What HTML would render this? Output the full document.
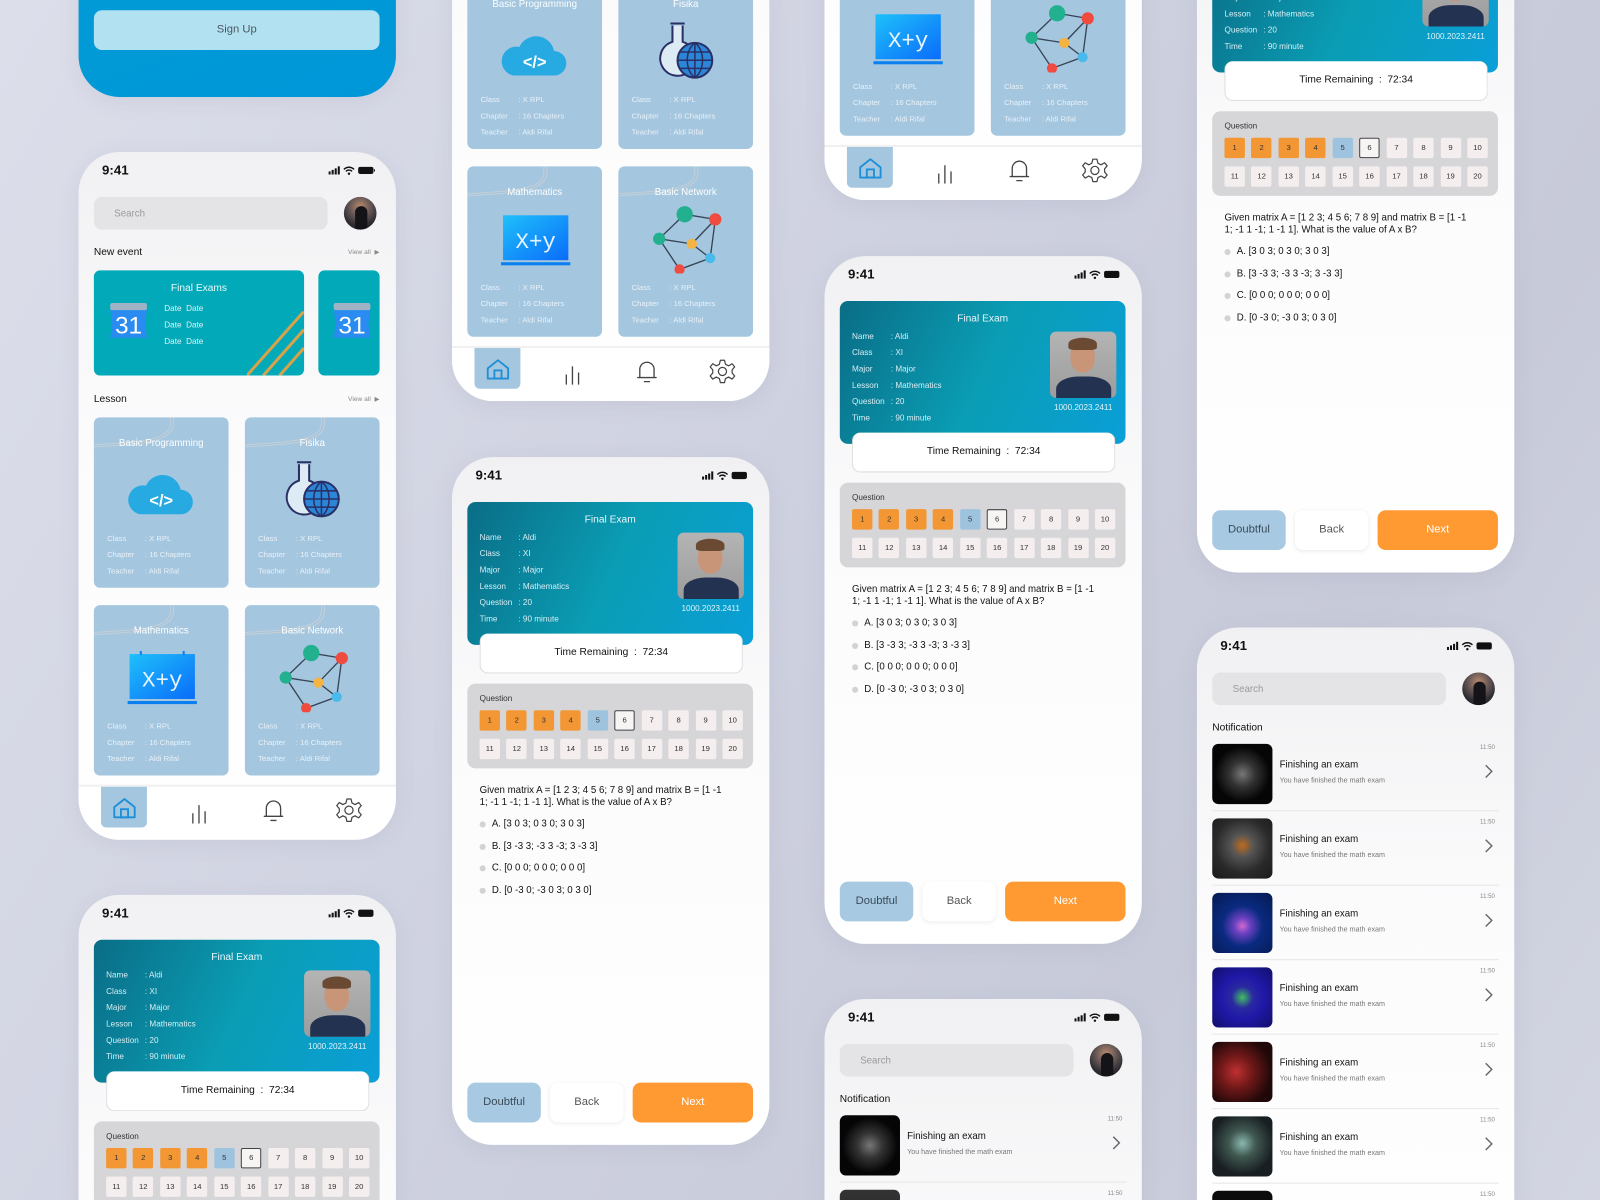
<!DOCTYPE html>
<html><head><meta charset="utf-8">
<style>
*{margin:0;padding:0;box-sizing:border-box}
html,body{width:1600px;height:1200px;overflow:hidden}
#clip{position:relative;width:1600px;height:1200px;overflow:hidden;background:linear-gradient(120deg,#dcdeea 0%,#cdd0df 50%,#c7cad9 75%,#d3d6e2 100%);font-family:"Liberation Sans",sans-serif;color:#222}
#w{position:absolute;left:0;top:0;width:1568px;height:1176px;transform:scale(1.0204);transform-origin:0 0}
.ph{position:absolute;width:311px;height:674px;border-radius:40px;background:linear-gradient(180deg,#f1f1f3 0%,#fbfbfc 40%,#ffffff 100%);overflow:hidden;box-shadow:0 4px 20px rgba(120,125,150,.12)}
.a{position:absolute}
.tm{position:absolute;left:23px;top:10px;font-size:13px;font-weight:bold;color:#111}
.sti{position:absolute;right:20px;top:13px}
.srch{position:absolute;left:15px;top:44px;width:229px;height:32px;border-radius:8px;background:#e4e4e6;font-size:9.5px;color:#9a9a9e;padding:11px 0 0 20px}
.av{position:absolute;left:260px;top:44px;width:32px;height:32px;border-radius:50%;background:radial-gradient(circle at 50% 30%,#b98a6a 0,#6a5a58 35%,#2a2a30 70%);overflow:hidden}
.av:after{content:"";position:absolute;left:11px;top:9px;width:12px;height:26px;border-radius:6px 6px 0 0;background:#141418}
.h{position:absolute;font-size:10px;color:#111}
.va{position:absolute;right:16px;font-size:6.5px;color:#888}
.ev{position:absolute;top:116px;height:103px;background:#02aab9;border-radius:6px;overflow:hidden}
.ev .t{position:absolute;top:12px;width:100%;text-align:center;color:#eaf8fa;font-size:10px}
.ev .d{position:absolute;left:69px;font-size:8px;color:#dff4f7}
.cal{position:absolute;width:38px;height:36px}
.lc{position:absolute;width:132px;height:167px;background:#a4c6df;border-radius:6px;overflow:hidden}
.lc .t{position:absolute;top:20px;width:100%;text-align:center;color:#fff;font-size:9.5px}
.lc .r{position:absolute;left:13px;font-size:7.5px;color:#e9f1f8}
.lc .r b{font-weight:normal;position:absolute;left:37px;white-space:nowrap}
.nav{position:absolute;left:0;top:620px;width:311px;height:54px;background:#fff;border-top:2px solid #f0f0f0}
.hb{position:absolute;left:22px;top:0;width:45px;height:40px;background:#a4c6df;border-radius:0 0 5px 5px}
.ec{position:absolute;left:15px;top:44px;width:280px;height:140px;border-radius:8px;background:linear-gradient(115deg,#0a6d86 0%,#0a9db4 50%,#0a9fd8 100%);overflow:hidden}
.ec .t{position:absolute;top:12px;width:100%;text-align:center;color:#e8f7fa;font-size:10px}
.ec .r{position:absolute;left:12px;font-size:8px;color:#d7eef4}
.ec .r b{font-weight:normal;position:absolute;left:38px;white-space:nowrap}
.pho{position:absolute;left:206px;top:30px;width:65px;height:65px;border-radius:6px;background:linear-gradient(#b4b4b4,#9c9c9c);overflow:hidden}
.pho .f{position:absolute;left:20px;top:10px;width:24px;height:30px;border-radius:45%;background:#c99578}
.pho .hr{position:absolute;left:18px;top:6px;width:28px;height:12px;border-radius:50% 50% 20% 20%;background:#6b4a34}
.pho .s{position:absolute;left:6px;top:44px;width:54px;height:30px;border-radius:40% 40% 0 0;background:#243252}
.ec .id{position:absolute;left:196px;top:100px;width:85px;text-align:center;font-size:8px;color:#dff3f8}
.trb{position:absolute;left:27px;top:173px;width:258px;height:39px;border-radius:8px;background:#fff;border:1px solid #ddd;border-top:none;text-align:center;font-size:10px;padding-top:13px;color:#111}
.qp{position:absolute;left:15px;top:222px;width:280px;height:83px;border-radius:8px;background:#d6d6d9}
.qp .l{position:absolute;left:12px;top:10px;font-size:8px;color:#333}
.qr{position:absolute;left:12px;width:258px;display:flex;justify-content:space-between}
.qr span{width:20px;height:20px;background:#f4eeee;font-size:7.5px;color:#333;text-align:center;line-height:20px;border-radius:2px}
.qr .o{background:#f29733}
.qr .b{background:#9dc3df}
.qr .c{border:1.5px solid #444;line-height:17px;background:#f7f4f4}
.qt{position:absolute;left:27px;top:321px;width:258px;font-size:9.5px;line-height:12px;color:#111}
.op{position:absolute;left:39px;font-size:9.5px;color:#111}
.op:before{content:"";position:absolute;left:-12px;top:3px;width:6px;height:6px;border-radius:50%;background:#d3d3d6}
.bt{position:absolute;top:613px;height:39px;border-radius:8px;text-align:center;font-size:11px;line-height:39px}
.ni{position:absolute;left:15px;width:281px;height:66px;border-bottom:1px solid #e6e6e6}
.ni .th{position:absolute;left:0;top:0;width:59px;height:59px;border-radius:6px;overflow:hidden}
.ni .t{position:absolute;left:66px;top:15px;font-size:9.5px;color:#111}
.ni .s{position:absolute;left:66px;top:33px;font-size:7px;color:#777}
.ni .tm2{position:absolute;right:4px;top:1px;font-size:6px;color:#888}
.ni .ch{position:absolute;right:6px;top:20px}
</style></head><body><div id="clip"><div id="w">

<div class="ph" style="left:77px;top:-579px;background:linear-gradient(160deg,#04a4cf,#0097d8)">
 <div class="a" style="left:15px;top:589px;width:280px;height:39px;border-radius:8px;background:#b2e2f1;text-align:center;line-height:39px;font-size:11px;color:#4a5660">Sign Up</div>
</div>

<div class="ph" style="left:77px;top:149px">
 <div class="tm">9:41</div>
 <svg class="sti" width="46" height="10" viewBox="0 0 46 10"><rect x="0" y="6" width="2" height="3" fill="#111"/><rect x="3" y="4.5" width="2" height="4.5" fill="#111"/><rect x="6" y="3" width="2" height="6" fill="#111"/><rect x="9" y="1" width="2" height="8" fill="#111"/><path d="M15 4a7 7 0 0 1 10 0M17 6a4 4 0 0 1 6 0" stroke="#111" stroke-width="1.4" fill="none"/><circle cx="20" cy="8.3" r="1.2" fill="#111"/><rect x="29" y="1.5" width="15" height="7" rx="2" fill="#111"/><rect x="44.5" y="4" width="1" height="2" fill="#111"/></svg>
 <div class="srch">Search</div><div class="av"></div>
 <div class="h" style="left:15px;top:93px">New event</div><div class="va" style="top:94px">View all &nbsp;▶</div>
 <div class="ev" style="left:15px;width:206px"><div class="t">Final Exams</div>
  <svg class="cal" style="left:15px;top:31px" viewBox="0 0 38 36"><rect x="1" y="1" width="36" height="7" rx="2" fill="#9fb2c6"/><path d="M1 8H37L35 21L37 35H1L3 21Z" fill="#2a8cf0"/><text x="19" y="31" font-size="24" fill="#fff" text-anchor="middle" font-family="Liberation Sans">31</text></svg>
  <div class="d" style="top:33px">Date &nbsp;Date</div><div class="d" style="top:49px">Date &nbsp;Date</div><div class="d" style="top:65px">Date &nbsp;Date</div>
  <svg class="a" style="left:150px;top:40px" width="56" height="63"><path d="M0 63L56 0M16 63L56 18M32 63L56 36" stroke="#d8a24a" stroke-width="3"/></svg></div>
 <div class="ev" style="left:235px;width:60px"><svg class="cal" style="left:14px;top:31px" viewBox="0 0 38 36"><rect x="1" y="1" width="36" height="7" rx="2" fill="#9fb2c6"/><path d="M1 8H37L35 21L37 35H1L3 21Z" fill="#2a8cf0"/><text x="19" y="31" font-size="24" fill="#fff" text-anchor="middle" font-family="Liberation Sans">31</text></svg></div>
 <div class="h" style="left:15px;top:237px">Lesson</div><div class="va" style="top:238px">View all &nbsp;▶</div>
 <div class="lc" style="left:15px;top:260px"><svg class="a" style="left:0;top:0" width="80" height="30"><path d="M0 27C40 24 75 24 75 6V0M0 29C42 26 78 26 78 6V0" stroke="#c5cfd6" stroke-width="1" fill="none"/></svg><div class="t">Basic Programming</div>
  <svg class="a" style="left:33px;top:53px" width="66" height="44" viewBox="0 0 66 44"><path d="M12 42H52A12 12 0 0 0 52 18A18 18 0 0 0 18 14A14 14 0 0 0 12 42Z" fill="#27a9e1"/><text x="33" y="34" font-size="16" font-weight="bold" fill="#fff" text-anchor="middle" font-family="Liberation Sans">&lt;/&gt;</text></svg>
  <div class="r" style="top:114px">Class<b>: X RPL</b></div><div class="r" style="top:130px">Chapter<b>: 16 Chapters</b></div><div class="r" style="top:146px">Teacher<b>: Aldi Rifal</b></div></div>
 <div class="lc" style="left:163px;top:260px"><svg class="a" style="left:0;top:0" width="80" height="30"><path d="M0 27C40 24 75 24 75 6V0M0 29C42 26 78 26 78 6V0" stroke="#c5cfd6" stroke-width="1" fill="none"/></svg><div class="t">Fisika</div>
  <svg class="a" style="left:38px;top:42px" width="58" height="60" viewBox="0 0 58 60"><path d="M13 2H27M15 4V20A17 17 0 1 0 25 20V4" fill="#dcebf4" stroke="#2a2f66" stroke-width="2"/><circle cx="37" cy="38" r="17" fill="#2c86d8" stroke="#2a2f66" stroke-width="2"/><path d="M20 38H54M22 30H52M22 46H52M37 21V55M37 21C27 28 27 48 37 55M37 21C47 28 47 48 37 55" stroke="#2a2f66" stroke-width="1.5" fill="none"/></svg>
  <div class="r" style="top:114px">Class<b>: X RPL</b></div><div class="r" style="top:130px">Chapter<b>: 16 Chapters</b></div><div class="r" style="top:146px">Teacher<b>: Aldi Rifal</b></div></div>
 <div class="lc" style="left:15px;top:444px"><svg class="a" style="left:0;top:0" width="80" height="30"><path d="M0 27C40 24 75 24 75 6V0M0 29C42 26 78 26 78 6V0" stroke="#c5cfd6" stroke-width="1" fill="none"/></svg><div class="t">Mathematics</div>
  <svg class="a" style="left:33px;top:44px" width="68" height="56" viewBox="0 0 68 56"><defs><linearGradient id="g1" x1="0" y1="0" x2="1" y2="1"><stop offset="0" stop-color="#1ec0fa"/><stop offset="1" stop-color="#0a6cfa"/></linearGradient></defs><rect x="2" y="4" width="64" height="44" fill="url(#g1)"/><rect x="12" y="1" width="2" height="4" fill="#0a80f0"/><rect x="54" y="1" width="2" height="4" fill="#0a80f0"/><rect x="0" y="50" width="68" height="3" fill="#0a80f0"/><text x="34" y="36" font-size="22" fill="#e6f4ff" text-anchor="middle" font-family="Liberation Mono">X+y</text></svg>
  <div class="r" style="top:114px">Class<b>: X RPL</b></div><div class="r" style="top:130px">Chapter<b>: 16 Chapters</b></div><div class="r" style="top:146px">Teacher<b>: Aldi Rifal</b></div></div>
 <div class="lc" style="left:163px;top:444px"><svg class="a" style="left:0;top:0" width="80" height="30"><path d="M0 27C40 24 75 24 75 6V0M0 29C42 26 78 26 78 6V0" stroke="#c5cfd6" stroke-width="1" fill="none"/></svg><div class="t">Basic Network</div>
  <svg class="a" style="left:32px;top:39px" width="70" height="66" viewBox="0 0 70 66"><path d="M33 8L63 13L58 51L28 62L8 32L33 8M8 32L40 37L63 13M40 37L58 51" stroke="#354454" stroke-width="1.3" fill="none"/><circle cx="33" cy="8" r="8" fill="#22b08f"/><circle cx="63" cy="13" r="6" fill="#ef4b3f"/><circle cx="8" cy="32" r="6" fill="#22b08f"/><circle cx="40" cy="37" r="5" fill="#f5b342"/><circle cx="58" cy="51" r="5" fill="#4ab9ec"/><circle cx="28" cy="62" r="5" fill="#ef4b3f"/></svg>
  <div class="r" style="top:114px">Class<b>: X RPL</b></div><div class="r" style="top:130px">Chapter<b>: 16 Chapters</b></div><div class="r" style="top:146px">Teacher<b>: Aldi Rifal</b></div></div>
 <div class="nav"><div class="hb"></div>
  <svg class="a" style="left:33px;top:10px" width="24" height="22" viewBox="0 0 24 22"><path d="M2 10L12 2L22 10V20H2Z" fill="none" stroke="#1c8fd8" stroke-width="1.8" stroke-linejoin="round"/><rect x="8.5" y="12" width="7" height="8" fill="none" stroke="#1c8fd8" stroke-width="1.8"/></svg>
  <svg class="a" style="left:109px;top:16px" width="18" height="20"><path d="M3 10V20M9 2V20M15 8V20" stroke="#444" stroke-width="1.3"/></svg>
  <svg class="a" style="left:180px;top:10px" width="22" height="26"><path d="M4 19V11A7 7 0 0 1 18 11V19H20H2Z" fill="none" stroke="#444" stroke-width="1.3" stroke-linejoin="round"/><path d="M8 23H14" stroke="#444" stroke-width="1.3"/></svg>
  <svg class="a" style="left:252px;top:10px" width="26" height="26" viewBox="0 0 26 26"><path d="M11 2H15L16 6L19 7.5L22.5 5.5L25 8.5L22.5 11.5V14.5L25 17.5L22.5 20.5L19 18.5L16 20L15 24H11L10 20L7 18.5L3.5 20.5L1 17.5L3.5 14.5V11.5L1 8.5L3.5 5.5L7 7.5L10 6Z" fill="none" stroke="#444" stroke-width="1.2" stroke-linejoin="round"/><circle cx="13" cy="13" r="4" fill="none" stroke="#444" stroke-width="1.2"/></svg></div>
</div>

<div class="ph" style="left:443px;top:-281px">
 <div class="lc" style="left:15px;top:260px"><div class="t">Basic Programming</div>
  <svg class="a" style="left:33px;top:53px" width="66" height="44" viewBox="0 0 66 44"><path d="M12 42H52A12 12 0 0 0 52 18A18 18 0 0 0 18 14A14 14 0 0 0 12 42Z" fill="#27a9e1"/><text x="33" y="34" font-size="16" font-weight="bold" fill="#fff" text-anchor="middle" font-family="Liberation Sans">&lt;/&gt;</text></svg>
  <div class="r" style="top:114px">Class<b>: X RPL</b></div><div class="r" style="top:130px">Chapter<b>: 16 Chapters</b></div><div class="r" style="top:146px">Teacher<b>: Aldi Rifal</b></div></div>
 <div class="lc" style="left:163px;top:260px"><div class="t">Fisika</div>
  <svg class="a" style="left:38px;top:42px" width="58" height="60" viewBox="0 0 58 60"><path d="M13 2H27M15 4V20A17 17 0 1 0 25 20V4" fill="#dcebf4" stroke="#2a2f66" stroke-width="2"/><circle cx="37" cy="38" r="17" fill="#2c86d8" stroke="#2a2f66" stroke-width="2"/><path d="M20 38H54M22 30H52M22 46H52M37 21V55M37 21C27 28 27 48 37 55M37 21C47 28 47 48 37 55" stroke="#2a2f66" stroke-width="1.5" fill="none"/></svg>
  <div class="r" style="top:114px">Class<b>: X RPL</b></div><div class="r" style="top:130px">Chapter<b>: 16 Chapters</b></div><div class="r" style="top:146px">Teacher<b>: Aldi Rifal</b></div></div>
 <div class="lc" style="left:15px;top:444px"><svg class="a" style="left:0;top:0" width="80" height="30"><path d="M0 27C40 24 75 24 75 6V0M0 29C42 26 78 26 78 6V0" stroke="#c5cfd6" stroke-width="1" fill="none"/></svg><div class="t">Mathematics</div>
  <svg class="a" style="left:33px;top:44px" width="68" height="56" viewBox="0 0 68 56"><rect x="2" y="4" width="64" height="44" fill="url(#g1)"/><rect x="0" y="50" width="68" height="3" fill="#0a80f0"/><text x="34" y="36" font-size="22" fill="#e6f4ff" text-anchor="middle" font-family="Liberation Mono">X+y</text></svg>
  <div class="r" style="top:114px">Class<b>: X RPL</b></div><div class="r" style="top:130px">Chapter<b>: 16 Chapters</b></div><div class="r" style="top:146px">Teacher<b>: Aldi Rifal</b></div></div>
 <div class="lc" style="left:163px;top:444px"><svg class="a" style="left:0;top:0" width="80" height="30"><path d="M0 27C40 24 75 24 75 6V0M0 29C42 26 78 26 78 6V0" stroke="#c5cfd6" stroke-width="1" fill="none"/></svg><div class="t">Basic Network</div>
  <svg class="a" style="left:32px;top:39px" width="70" height="66" viewBox="0 0 70 66"><path d="M33 8L63 13L58 51L28 62L8 32L33 8M8 32L40 37L63 13M40 37L58 51" stroke="#354454" stroke-width="1.3" fill="none"/><circle cx="33" cy="8" r="8" fill="#22b08f"/><circle cx="63" cy="13" r="6" fill="#ef4b3f"/><circle cx="8" cy="32" r="6" fill="#22b08f"/><circle cx="40" cy="37" r="5" fill="#f5b342"/><circle cx="58" cy="51" r="5" fill="#4ab9ec"/><circle cx="28" cy="62" r="5" fill="#ef4b3f"/></svg>
  <div class="r" style="top:114px">Class<b>: X RPL</b></div><div class="r" style="top:130px">Chapter<b>: 16 Chapters</b></div><div class="r" style="top:146px">Teacher<b>: Aldi Rifal</b></div></div>
 <div class="nav"><div class="hb"></div>
  <svg class="a" style="left:33px;top:10px" width="24" height="22" viewBox="0 0 24 22"><path d="M2 10L12 2L22 10V20H2Z" fill="none" stroke="#1c8fd8" stroke-width="1.8" stroke-linejoin="round"/><rect x="8.5" y="12" width="7" height="8" fill="none" stroke="#1c8fd8" stroke-width="1.8"/></svg>
  <svg class="a" style="left:109px;top:16px" width="18" height="20"><path d="M3 10V20M9 2V20M15 8V20" stroke="#444" stroke-width="1.3"/></svg>
  <svg class="a" style="left:180px;top:10px" width="22" height="26"><path d="M4 19V11A7 7 0 0 1 18 11V19H20H2Z" fill="none" stroke="#444" stroke-width="1.3" stroke-linejoin="round"/><path d="M8 23H14" stroke="#444" stroke-width="1.3"/></svg>
  <svg class="a" style="left:252px;top:10px" width="26" height="26" viewBox="0 0 26 26"><path d="M11 2H15L16 6L19 7.5L22.5 5.5L25 8.5L22.5 11.5V14.5L25 17.5L22.5 20.5L19 18.5L16 20L15 24H11L10 20L7 18.5L3.5 20.5L1 17.5L3.5 14.5V11.5L1 8.5L3.5 5.5L7 7.5L10 6Z" fill="none" stroke="#444" stroke-width="1.2" stroke-linejoin="round"/><circle cx="13" cy="13" r="4" fill="none" stroke="#444" stroke-width="1.2"/></svg></div>
</div>

<div class="ph" style="left:808px;top:-478px">
 <div class="lc" style="left:15px;top:444px"><div class="t">Mathematics</div>
  <svg class="a" style="left:33px;top:44px" width="68" height="56" viewBox="0 0 68 56"><rect x="2" y="4" width="64" height="44" fill="url(#g1)"/><rect x="0" y="50" width="68" height="3" fill="#0a80f0"/><text x="34" y="36" font-size="22" fill="#e6f4ff" text-anchor="middle" font-family="Liberation Mono">X+y</text></svg>
  <div class="r" style="top:114px">Class<b>: X RPL</b></div><div class="r" style="top:130px">Chapter<b>: 16 Chapters</b></div><div class="r" style="top:146px">Teacher<b>: Aldi Rifal</b></div></div>
 <div class="lc" style="left:163px;top:444px"><div class="t">Basic Network</div>
  <svg class="a" style="left:32px;top:39px" width="70" height="66" viewBox="0 0 70 66"><path d="M33 8L63 13L58 51L28 62L8 32L33 8M8 32L40 37L63 13M40 37L58 51" stroke="#354454" stroke-width="1.3" fill="none"/><circle cx="33" cy="8" r="8" fill="#22b08f"/><circle cx="63" cy="13" r="6" fill="#ef4b3f"/><circle cx="8" cy="32" r="6" fill="#22b08f"/><circle cx="40" cy="37" r="5" fill="#f5b342"/><circle cx="58" cy="51" r="5" fill="#4ab9ec"/><circle cx="28" cy="62" r="5" fill="#ef4b3f"/></svg>
  <div class="r" style="top:114px">Class<b>: X RPL</b></div><div class="r" style="top:130px">Chapter<b>: 16 Chapters</b></div><div class="r" style="top:146px">Teacher<b>: Aldi Rifal</b></div></div>
 <div class="nav"><div class="hb"></div>
  <svg class="a" style="left:33px;top:10px" width="24" height="22" viewBox="0 0 24 22"><path d="M2 10L12 2L22 10V20H2Z" fill="none" stroke="#1c8fd8" stroke-width="1.8" stroke-linejoin="round"/><rect x="8.5" y="12" width="7" height="8" fill="none" stroke="#1c8fd8" stroke-width="1.8"/></svg>
  <svg class="a" style="left:109px;top:16px" width="18" height="20"><path d="M3 10V20M9 2V20M15 8V20" stroke="#444" stroke-width="1.3"/></svg>
  <svg class="a" style="left:180px;top:10px" width="22" height="26"><path d="M4 19V11A7 7 0 0 1 18 11V19H20H2Z" fill="none" stroke="#444" stroke-width="1.3" stroke-linejoin="round"/><path d="M8 23H14" stroke="#444" stroke-width="1.3"/></svg>
  <svg class="a" style="left:252px;top:10px" width="26" height="26" viewBox="0 0 26 26"><path d="M11 2H15L16 6L19 7.5L22.5 5.5L25 8.5L22.5 11.5V14.5L25 17.5L22.5 20.5L19 18.5L16 20L15 24H11L10 20L7 18.5L3.5 20.5L1 17.5L3.5 14.5V11.5L1 8.5L3.5 5.5L7 7.5L10 6Z" fill="none" stroke="#444" stroke-width="1.2" stroke-linejoin="round"/><circle cx="13" cy="13" r="4" fill="none" stroke="#444" stroke-width="1.2"/></svg></div>
</div>

<div class="ph" style="left:77px;top:877px">
 <div class="tm">9:41</div>
 <svg class="sti" width="46" height="10" viewBox="0 0 46 10"><rect x="0" y="6" width="2" height="3" fill="#111"/><rect x="3" y="4.5" width="2" height="4.5" fill="#111"/><rect x="6" y="3" width="2" height="6" fill="#111"/><rect x="9" y="1" width="2" height="8" fill="#111"/><path d="M15 4a7 7 0 0 1 10 0M17 6a4 4 0 0 1 6 0" stroke="#111" stroke-width="1.4" fill="none"/><circle cx="20" cy="8.3" r="1.2" fill="#111"/><rect x="29" y="1.5" width="15" height="7" rx="2" fill="#111"/></svg>
 <div class="ec"><div class="t">Final Exam</div>
  <div class="r" style="top:30px">Name<b>: Aldi</b></div><div class="r" style="top:46px">Class<b>: XI</b></div><div class="r" style="top:62px">Major<b>: Major</b></div><div class="r" style="top:78px">Lesson<b>: Mathematics</b></div><div class="r" style="top:94px">Question<b>: 20</b></div><div class="r" style="top:110px">Time<b>: 90 minute</b></div>
  <div class="pho"><div class="s"></div><div class="f"></div><div class="hr"></div></div><div class="id">1000.2023.2411</div></div>
 <div class="trb">Time Remaining &nbsp;: &nbsp;72:34</div>
 <div class="qp"><div class="l">Question</div>
  <div class="qr" style="top:26px"><span class="o">1</span><span class="o">2</span><span class="o">3</span><span class="o">4</span><span class="b">5</span><span class="c">6</span><span>7</span><span>8</span><span>9</span><span>10</span></div>
  <div class="qr" style="top:54px"><span>11</span><span>12</span><span>13</span><span>14</span><span>15</span><span>16</span><span>17</span><span>18</span><span>19</span><span>20</span></div></div>
</div>

<div class="ph" style="left:443px;top:448px">
 <div class="tm">9:41</div>
 <svg class="sti" width="46" height="10" viewBox="0 0 46 10"><rect x="0" y="6" width="2" height="3" fill="#111"/><rect x="3" y="4.5" width="2" height="4.5" fill="#111"/><rect x="6" y="3" width="2" height="6" fill="#111"/><rect x="9" y="1" width="2" height="8" fill="#111"/><path d="M15 4a7 7 0 0 1 10 0M17 6a4 4 0 0 1 6 0" stroke="#111" stroke-width="1.4" fill="none"/><circle cx="20" cy="8.3" r="1.2" fill="#111"/><rect x="29" y="1.5" width="15" height="7" rx="2" fill="#111"/></svg>
 <div class="ec"><div class="t">Final Exam</div>
  <div class="r" style="top:30px">Name<b>: Aldi</b></div><div class="r" style="top:46px">Class<b>: XI</b></div><div class="r" style="top:62px">Major<b>: Major</b></div><div class="r" style="top:78px">Lesson<b>: Mathematics</b></div><div class="r" style="top:94px">Question<b>: 20</b></div><div class="r" style="top:110px">Time<b>: 90 minute</b></div>
  <div class="pho"><div class="s"></div><div class="f"></div><div class="hr"></div></div><div class="id">1000.2023.2411</div></div>
 <div class="trb">Time Remaining &nbsp;: &nbsp;72:34</div>
 <div class="qp"><div class="l">Question</div>
  <div class="qr" style="top:26px"><span class="o">1</span><span class="o">2</span><span class="o">3</span><span class="o">4</span><span class="b">5</span><span class="c">6</span><span>7</span><span>8</span><span>9</span><span>10</span></div>
  <div class="qr" style="top:54px"><span>11</span><span>12</span><span>13</span><span>14</span><span>15</span><span>16</span><span>17</span><span>18</span><span>19</span><span>20</span></div></div>
 <div class="qt">Given matrix A = [1 2 3; 4 5 6; 7 8 9] and matrix B = [1 -1<br>1; -1 1 -1; 1 -1 1]. What is the value of A x B?</div>
 <div class="op" style="top:354px">A. [3 0 3; 0 3 0; 3 0 3]</div><div class="op" style="top:376px">B. [3 -3 3; -3 3 -3; 3 -3 3]</div><div class="op" style="top:397px">C. [0 0 0; 0 0 0; 0 0 0]</div><div class="op" style="top:419px">D. [0 -3 0; -3 0 3; 0 3 0]</div>
 <div class="bt" style="left:15px;width:72px;background:#a7c9e2;color:#3a4a58">Doubtful</div><div class="bt" style="left:96px;width:72px;background:#fff;color:#555;box-shadow:0 1px 4px rgba(0,0,0,.08)">Back</div><div class="bt" style="left:177px;width:118px;background:#ff9a33;color:#fff">Next</div>
</div>

<div class="ph" style="left:808px;top:251px">
 <div class="tm">9:41</div>
 <svg class="sti" width="46" height="10" viewBox="0 0 46 10"><rect x="0" y="6" width="2" height="3" fill="#111"/><rect x="3" y="4.5" width="2" height="4.5" fill="#111"/><rect x="6" y="3" width="2" height="6" fill="#111"/><rect x="9" y="1" width="2" height="8" fill="#111"/><path d="M15 4a7 7 0 0 1 10 0M17 6a4 4 0 0 1 6 0" stroke="#111" stroke-width="1.4" fill="none"/><circle cx="20" cy="8.3" r="1.2" fill="#111"/><rect x="29" y="1.5" width="15" height="7" rx="2" fill="#111"/></svg>
 <div class="ec"><div class="t">Final Exam</div>
  <div class="r" style="top:30px">Name<b>: Aldi</b></div><div class="r" style="top:46px">Class<b>: XI</b></div><div class="r" style="top:62px">Major<b>: Major</b></div><div class="r" style="top:78px">Lesson<b>: Mathematics</b></div><div class="r" style="top:94px">Question<b>: 20</b></div><div class="r" style="top:110px">Time<b>: 90 minute</b></div>
  <div class="pho"><div class="s"></div><div class="f"></div><div class="hr"></div></div><div class="id">1000.2023.2411</div></div>
 <div class="trb">Time Remaining &nbsp;: &nbsp;72:34</div>
 <div class="qp"><div class="l">Question</div>
  <div class="qr" style="top:26px"><span class="o">1</span><span class="o">2</span><span class="o">3</span><span class="o">4</span><span class="b">5</span><span class="c">6</span><span>7</span><span>8</span><span>9</span><span>10</span></div>
  <div class="qr" style="top:54px"><span>11</span><span>12</span><span>13</span><span>14</span><span>15</span><span>16</span><span>17</span><span>18</span><span>19</span><span>20</span></div></div>
 <div class="qt">Given matrix A = [1 2 3; 4 5 6; 7 8 9] and matrix B = [1 -1<br>1; -1 1 -1; 1 -1 1]. What is the value of A x B?</div>
 <div class="op" style="top:354px">A. [3 0 3; 0 3 0; 3 0 3]</div><div class="op" style="top:376px">B. [3 -3 3; -3 3 -3; 3 -3 3]</div><div class="op" style="top:397px">C. [0 0 0; 0 0 0; 0 0 0]</div><div class="op" style="top:419px">D. [0 -3 0; -3 0 3; 0 3 0]</div>
 <div class="bt" style="left:15px;width:72px;background:#a7c9e2;color:#3a4a58">Doubtful</div><div class="bt" style="left:96px;width:72px;background:#fff;color:#555;box-shadow:0 1px 4px rgba(0,0,0,.08)">Back</div><div class="bt" style="left:177px;width:118px;background:#ff9a33;color:#fff">Next</div>
</div>

<div class="ph" style="left:1173px;top:-113px">
 <div class="ec"><div class="t">Final Exam</div>
  <div class="r" style="top:30px">Name<b>: Aldi</b></div><div class="r" style="top:46px">Class<b>: XI</b></div><div class="r" style="top:62px">Major<b>: Major</b></div><div class="r" style="top:78px">Lesson<b>: Mathematics</b></div><div class="r" style="top:94px">Question<b>: 20</b></div><div class="r" style="top:110px">Time<b>: 90 minute</b></div>
  <div class="pho"><div class="s"></div><div class="f"></div><div class="hr"></div></div><div class="id">1000.2023.2411</div></div>
 <div class="trb">Time Remaining &nbsp;: &nbsp;72:34</div>
 <div class="qp"><div class="l">Question</div>
  <div class="qr" style="top:26px"><span class="o">1</span><span class="o">2</span><span class="o">3</span><span class="o">4</span><span class="b">5</span><span class="c">6</span><span>7</span><span>8</span><span>9</span><span>10</span></div>
  <div class="qr" style="top:54px"><span>11</span><span>12</span><span>13</span><span>14</span><span>15</span><span>16</span><span>17</span><span>18</span><span>19</span><span>20</span></div></div>
 <div class="qt">Given matrix A = [1 2 3; 4 5 6; 7 8 9] and matrix B = [1 -1<br>1; -1 1 -1; 1 -1 1]. What is the value of A x B?</div>
 <div class="op" style="top:354px">A. [3 0 3; 0 3 0; 3 0 3]</div><div class="op" style="top:376px">B. [3 -3 3; -3 3 -3; 3 -3 3]</div><div class="op" style="top:397px">C. [0 0 0; 0 0 0; 0 0 0]</div><div class="op" style="top:419px">D. [0 -3 0; -3 0 3; 0 3 0]</div>
 <div class="bt" style="left:15px;width:72px;background:#a7c9e2;color:#3a4a58">Doubtful</div><div class="bt" style="left:96px;width:72px;background:#fff;color:#555;box-shadow:0 1px 4px rgba(0,0,0,.08)">Back</div><div class="bt" style="left:177px;width:118px;background:#ff9a33;color:#fff">Next</div>
</div>

<div class="ph" style="left:808px;top:979px">
 <div class="tm">9:41</div>
 <svg class="sti" width="46" height="10" viewBox="0 0 46 10"><rect x="0" y="6" width="2" height="3" fill="#111"/><rect x="3" y="4.5" width="2" height="4.5" fill="#111"/><rect x="6" y="3" width="2" height="6" fill="#111"/><rect x="9" y="1" width="2" height="8" fill="#111"/><path d="M15 4a7 7 0 0 1 10 0M17 6a4 4 0 0 1 6 0" stroke="#111" stroke-width="1.4" fill="none"/><circle cx="20" cy="8.3" r="1.2" fill="#111"/><rect x="29" y="1.5" width="15" height="7" rx="2" fill="#111"/></svg>
 <div class="srch">Search</div><div class="av"></div>
 <div class="h" style="left:15px;top:93px">Notification</div>
 <div class="ni" style="top:114px"><div class="th" style="background:radial-gradient(circle,#777 0,#333 30%,#050505 65%)"></div><div class="t">Finishing an exam</div><div class="s">You have finished the math exam</div><div class="tm2">11:50</div><svg class="ch" width="8" height="14"><path d="M1 1L7 7L1 13" stroke="#666" stroke-width="1.4" fill="none"/></svg></div>
 <div class="ni" style="top:187px"><div class="th" style="background:linear-gradient(#333,#222)"></div><div class="t">Finishing an exam</div><div class="s">You have finished the math exam</div><div class="tm2">11:50</div><svg class="ch" width="8" height="14"><path d="M1 1L7 7L1 13" stroke="#666" stroke-width="1.4" fill="none"/></svg></div>
</div>

<div class="ph" style="left:1173px;top:615px">
 <div class="tm">9:41</div>
 <svg class="sti" width="46" height="10" viewBox="0 0 46 10"><rect x="0" y="6" width="2" height="3" fill="#111"/><rect x="3" y="4.5" width="2" height="4.5" fill="#111"/><rect x="6" y="3" width="2" height="6" fill="#111"/><rect x="9" y="1" width="2" height="8" fill="#111"/><path d="M15 4a7 7 0 0 1 10 0M17 6a4 4 0 0 1 6 0" stroke="#111" stroke-width="1.4" fill="none"/><circle cx="20" cy="8.3" r="1.2" fill="#111"/><rect x="29" y="1.5" width="15" height="7" rx="2" fill="#111"/></svg>
 <div class="srch">Search</div><div class="av"></div>
 <div class="h" style="left:15px;top:93px">Notification</div>
 <div class="ni" style="top:114px"><div class="th" style="background:radial-gradient(circle,#777 0,#333 30%,#050505 65%)"></div><div class="t">Finishing an exam</div><div class="s">You have finished the math exam</div><div class="tm2">11:50</div><svg class="ch" width="8" height="14"><path d="M1 1L7 7L1 13" stroke="#666" stroke-width="1.4" fill="none"/></svg></div>
 <div class="ni" style="top:187px"><div class="th" style="background:radial-gradient(circle at 50% 45%,#c06a20 0,#555 25%,#2a2a2a 60%,#1a1a1a)"></div><div class="t">Finishing an exam</div><div class="s">You have finished the math exam</div><div class="tm2">11:50</div><svg class="ch" width="8" height="14"><path d="M1 1L7 7L1 13" stroke="#666" stroke-width="1.4" fill="none"/></svg></div>
 <div class="ni" style="top:260px"><div class="th" style="background:radial-gradient(circle at 50% 55%,#d06ad0 0,#6a40c0 18%,#0a2a80 45%,#061a50)"></div><div class="t">Finishing an exam</div><div class="s">You have finished the math exam</div><div class="tm2">11:50</div><svg class="ch" width="8" height="14"><path d="M1 1L7 7L1 13" stroke="#666" stroke-width="1.4" fill="none"/></svg></div>
 <div class="ni" style="top:333px"><div class="th" style="background:radial-gradient(circle at 50% 50%,#40c060 0,#2a2aa0 25%,#2018a8 50%,#10106a)"></div><div class="t">Finishing an exam</div><div class="s">You have finished the math exam</div><div class="tm2">11:50</div><svg class="ch" width="8" height="14"><path d="M1 1L7 7L1 13" stroke="#666" stroke-width="1.4" fill="none"/></svg></div>
 <div class="ni" style="top:406px"><div class="th" style="background:radial-gradient(circle at 40% 50%,#c03030 0,#701818 35%,#200808 75%)"></div><div class="t">Finishing an exam</div><div class="s">You have finished the math exam</div><div class="tm2">11:50</div><svg class="ch" width="8" height="14"><path d="M1 1L7 7L1 13" stroke="#666" stroke-width="1.4" fill="none"/></svg></div>
 <div class="ni" style="top:479px"><div class="th" style="background:radial-gradient(circle at 50% 45%,#8ab8b0 0,#405850 30%,#181e22 70%)"></div><div class="t">Finishing an exam</div><div class="s">You have finished the math exam</div><div class="tm2">11:50</div><svg class="ch" width="8" height="14"><path d="M1 1L7 7L1 13" stroke="#666" stroke-width="1.4" fill="none"/></svg></div>
 <div class="ni" style="top:552px"><div class="th" style="background:#0c0c0c"></div><div class="tm2">11:50</div></div>
</div>

</div></div></body></html>
